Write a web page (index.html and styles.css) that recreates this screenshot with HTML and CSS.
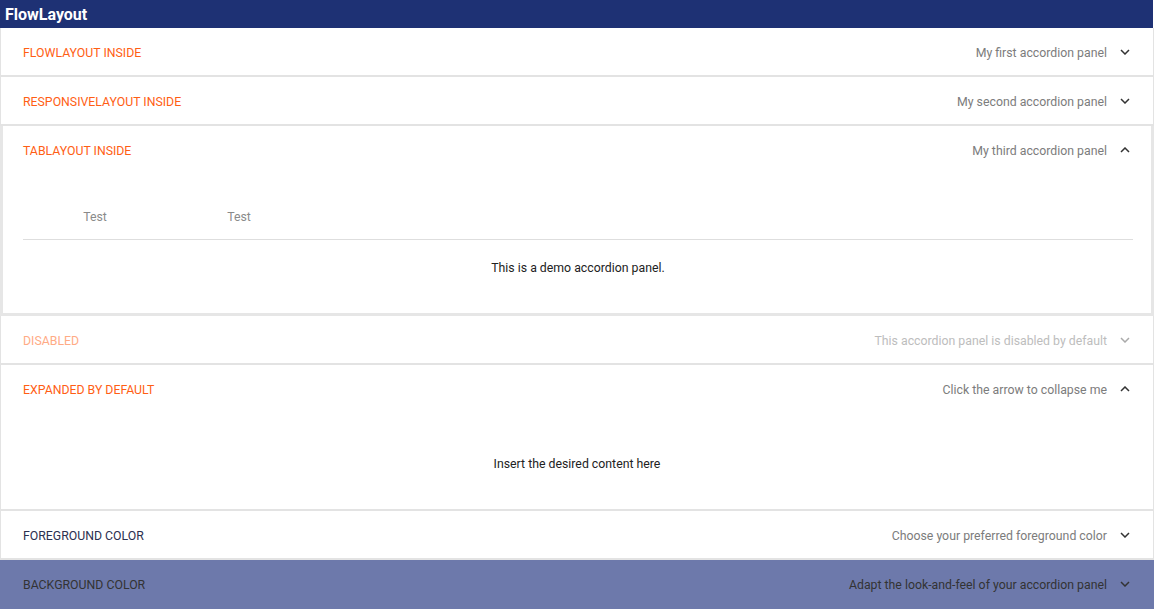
FILE: index.html
```html
<!DOCTYPE html>
<html lang="en">
<head>
    <meta charset="UTF-8">
    <title>FlowLayout</title>
    <link rel="stylesheet" href="styles.css">
</head>
<body>
    <div class="title_bar">FlowLayout</div>

    <div class="accordion">
        <div class="panel">
            <div class="panel_head">
                <span class="panel_title">FlowLayout inside</span>
                <span class="panel_desc">My first accordion panel</span>
                <span class="arrow"><svg width="10" height="6" viewBox="0 0 10 6"><path d="M1 1l4 4 4-4" /></svg></span>
            </div>
        </div>

        <div class="panel">
            <div class="panel_head">
                <span class="panel_title">ResponsiveLayout inside</span>
                <span class="panel_desc">My second accordion panel</span>
                <span class="arrow"><svg width="10" height="6" viewBox="0 0 10 6"><path d="M1 1l4 4 4-4" /></svg></span>
            </div>
        </div>

        <div class="panel focused">
            <div class="panel_head">
                <span class="panel_title">TabLayout inside</span>
                <span class="panel_desc">My third accordion panel</span>
                <span class="arrow"><svg width="10" height="6" viewBox="0 0 10 6"><path d="M1 5l4-4 4 4" /></svg></span>
            </div>
            <div class="tab_body">
                <div class="tabs">
                    <div class="tab">Test</div>
                    <div class="tab">Test</div>
                </div>
                <div class="tab_content">This is a demo accordion panel.</div>
            </div>
        </div>

        <div class="panel disabled">
            <div class="panel_head">
                <span class="panel_title">Disabled</span>
                <span class="panel_desc">This accordion panel is disabled by default</span>
                <span class="arrow"><svg width="10" height="6" viewBox="0 0 10 6"><path d="M1 1l4 4 4-4" /></svg></span>
            </div>
        </div>

        <div class="panel">
            <div class="panel_head">
                <span class="panel_title">Expanded by default</span>
                <span class="panel_desc">Click the arrow to collapse me</span>
                <span class="arrow"><svg width="10" height="6" viewBox="0 0 10 6"><path d="M1 5l4-4 4 4" /></svg></span>
            </div>
            <div class="panel_body">Insert the desired content here</div>
        </div>

        <div class="panel fg">
            <div class="panel_head">
                <span class="panel_title">Foreground color</span>
                <span class="panel_desc">Choose your preferred foreground color</span>
                <span class="arrow"><svg width="10" height="6" viewBox="0 0 10 6"><path d="M1 1l4 4 4-4" /></svg></span>
            </div>
        </div>

        <div class="panel bg">
            <div class="panel_head">
                <span class="panel_title">Background color</span>
                <span class="panel_desc">Adapt the look-and-feel of your accordion panel</span>
                <span class="arrow"><svg width="10" height="6" viewBox="0 0 10 6"><path d="M1 1l4 4 4-4" /></svg></span>
            </div>
        </div>
    </div>
</body>
</html>
```

FILE: styles.css
```css
* {
    margin: 0;
    padding: 0;
    box-sizing: border-box;
}

body {
    width: 1154px;
    font-family: Roboto, "Liberation Sans", sans-serif;
    font-size: 12.3px;
    background-color: #fff;
}

.title_bar {
    height: 28px;
    width: 1153px;
    padding-left: 5px;
    line-height: 29px;
    font-size: 16px;
    font-weight: bold;
    color: #fff;
    background-color: #1e3174;
}

.panel {
    border: 1px solid #e3e3e3;
    border-top: none;
    border-bottom-width: 2px;
    background-color: #fff;
}

.panel_head {
    display: flex;
    align-items: center;
    height: 47px;
    padding: 2px 20px 0 22px;
}

.panel_title {
    flex: 1;
    text-transform: uppercase;
    color: #ff5e14;
}

.panel_desc {
    color: #7c7c7c;
    margin-right: 10px;
}

.arrow {
    display: flex;
    justify-content: center;
    width: 16px;
    margin-top: -1px;
}

.arrow path {
    fill: none;
    stroke: #333;
    stroke-width: 1.5;
}

.focused {
    border: 3px solid #e6e6e6;
    border-top: none;
    padding-bottom: 1px;
}

.focused .panel_head {
    padding-left: 20px;
    padding-right: 18px;
}

.tab_body {
    padding: 18px 18px 0 20px;
    height: 139px;
}

.tabs {
    display: flex;
    border-bottom: 1px solid #dedede;
}

.tab {
    width: 144px;
    height: 48px;
    line-height: 52px;
    text-align: center;
    color: #8a8a8a;
}

.tab_content {
    height: 57px;
    line-height: 57px;
    text-align: center;
    color: #222;
}

.disabled .panel_title {
    color: #ffab85;
}

.disabled .panel_desc {
    color: #bdbdbd;
}

.disabled .arrow path {
    stroke: #aaa;
}

.panel_body {
    height: 97px;
    padding-top: 8px;
    line-height: 89px;
    text-align: center;
    color: #222;
}

.fg .panel_title {
    color: #2b3050;
}

.bg {
    background-color: #6d79ab;
    border-color: #6d79ab;
}

.bg .panel_title,
.bg .panel_desc {
    color: #333;
}
```
